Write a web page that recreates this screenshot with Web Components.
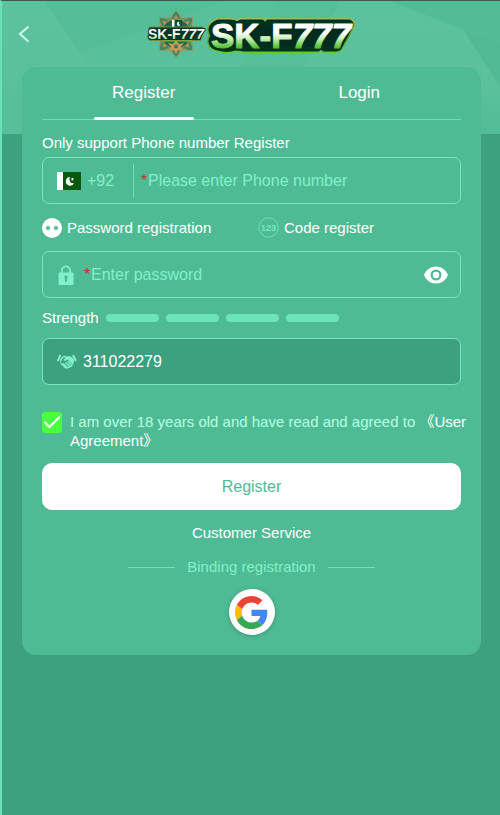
<!DOCTYPE html>
<html lang="en">
<head>
<meta charset="utf-8">
<meta name="viewport" content="width=device-width, initial-scale=1">
<title>SK-F777 Register</title>
<style>
  :root {
    --page: #3da07f; --card: #4fbb95; --line: #68e0b8; --mint: #82f0ca; --soft: #b4ffe4; --white: #fff;
  }
  body { margin: 0; background: var(--page); color: var(--white);
    font: 15px/20px "Liberation Sans", Arial, "Noto Sans CJK SC", sans-serif; }
</style>
</head>
<body>
<app-page></app-page>

<template id="t-page">
  <style>
    :host { display: grid; box-sizing: border-box; min-height: 100vh; grid-template: 66px 67px auto 1fr / minmax(0, 1fr);
      border-left: 2px solid var(--line); border-top: 1px solid #3b5a50; background: var(--page); }
    page-backdrop { grid-area: 1 / 1 / 3 / 2; }
    page-header { grid-area: 1 / 1; }
    auth-card { grid-area: 2 / 1 / 4 / 2; margin: 0 19px 20px 20px; }
  </style>
  <page-backdrop></page-backdrop>
  <page-header></page-header>
  <auth-card>
    <tab-bar slot="tabs"></tab-bar>
    <register-form></register-form>
    <social-binding></social-binding>
  </auth-card>
</template>

<template id="t-backdrop">
  <style>:host { display: block; } svg { display: block; width: 100%; height: 100%; }</style>
  <svg viewBox="0 0 498 133" preserveAspectRatio="none" aria-hidden="true">
    <defs><linearGradient id="g" x1="0" y1="0" x2="0" y2="1"><stop offset="0" stop-color="#5cc29e"/><stop offset=".6" stop-color="#5ac19c"/><stop offset="1" stop-color="#53bd98"/></linearGradient></defs>
    <rect width="498" height="133" fill="url(#g)"/>
    <path d="M42 0 78 52 222 0z" fill="#54be99"/>
    <path d="M78 52 222 0H275L240 66H86z" fill="#58c09b"/>
    <path d="M338 0 302 66H240L275 0z" fill="#56bf9a"/>
    <path d="M388 0 462 29 498 86V0z" fill="#52bc97"/>
    <path d="M462 29 498 86V44z" fill="#4fba94"/>
    <path d="M0 86 20 92V133H0z" fill="#57bf9a"/>
  </svg>
</template>

<template id="t-header">
  <style>
    :host { display: grid; grid-template-columns: 44px minmax(0, 1fr) 44px; align-items: center; }
    button { all: unset; display: grid; place-items: center; height: 44px; cursor: pointer; }
    brand-logo { justify-self: center; }
  </style>
  <button type="button" aria-label="Back">
    <svg width="12" height="18" viewBox="0 0 12 18" fill="none" stroke="#c9fff0" stroke-width="2"><path d="M10.5 1.5 2 9l8.500 7.500"/></svg>
  </button>
  <brand-logo></brand-logo>
</template>

<template id="t-logo">
  <style>:host { display: block; } svg { display: block; }
    text { font-family: "Liberation Sans", Arial, sans-serif; font-weight: 700; }</style>
  <svg width="212" height="50" viewBox="146 9 212 50" role="img" aria-label="SK-F777">
    <defs>
      <linearGradient id="f" gradientUnits="userSpaceOnUse" x1="0" y1="22" x2="0" y2="49"><stop offset=".4" stop-color="#fff"/><stop offset=".62" stop-color="#c5efb4"/><stop offset=".95" stop-color="#50c02f"/></linearGradient>
      <linearGradient id="h" gradientUnits="userSpaceOnUse" x1="0" y1="28" x2="0" y2="39"><stop offset=".55" stop-color="#fff"/><stop offset="1" stop-color="#aade8e"/></linearGradient>
      <linearGradient id="e" gradientUnits="userSpaceOnUse" x1="0" y1="18" x2="0" y2="53"><stop offset="0" stop-color="#a5bd55"/><stop offset=".5" stop-color="#579d36"/><stop offset="1" stop-color="#62cb35"/></linearGradient>
      <g id="petal"><path d="M177 10.500q5 5 5 10l-5 5-5-5q0-5 5-10z" fill="#438465" stroke="#98985f"/><path d="M177 15l2 3-2 3-2-3z" fill="#b09257"/></g>
    </defs>
    <g fill="#4b7955" stroke="#8f9860" stroke-width="1">
      <rect x="161" y="18" width="32" height="32"/>
      <rect x="162" y="19" width="30" height="30" transform="rotate(45 177 34)"/>
    </g>
    <use href="#petal"/><use href="#petal" transform="rotate(45 177 34)"/><use href="#petal" transform="rotate(135 177 34)"/>
    <use href="#petal" transform="rotate(180 177 34)"/><use href="#petal" transform="rotate(225 177 34)"/><use href="#petal" transform="rotate(315 177 34)"/>
    <circle cx="177" cy="34" r="15" fill="#24664a" stroke="#a89458"/>
    <path d="M177 40l3 4 5-1-3 4 2 4-5-1-2 4-2-4-5 1 2-4-3-4 5 1z" fill="#c49a54"/>
    <circle cx="177" cy="46.500" r="2" fill="#43764e"/>
    <rect x="173" y="20" width="10" height="8" fill="#07513a"/><rect x="173" y="20" width="2.500" height="8" fill="#fff"/>
    <path d="M180.500 22a2 2 0 1 0 1 3 2 2 0 0 1-1-3z" fill="#d9efdf"/>
    <path d="M150 27h54l1.500 2-4 11.500H151l-2-2z" fill="#08372a" stroke="#74913d"/>
    <text x="149" y="39" font-size="14" fill="url(#h)" stroke="#08372a" stroke-width="2" stroke-linejoin="round" paint-order="stroke">SK-F<tspan font-style="italic">777</tspan></text>
    <path d="M164 41h29" stroke="#70c33e"/>
    <g stroke-linejoin="round">
      <path d="M219 22h12q4 0 7 2l4-2h21l4 4h2v-4h80q3 0 3 3l-12 23q-1 1-3 1h-12l-3-3-3 3h-74q-5-1-9-1-8 3-17 0-6-1-7-6 0-4 3-6-3-3-3-7 1-5 7-7z" fill="url(#e)" stroke="url(#e)" stroke-width="8"/>
      <path d="M219 22h12q4 0 7 2l4-2h21l4 4h2v-4h80q3 0 3 3l-12 23q-1 1-3 1h-12l-3-3-3 3h-74q-5-1-9-1-8 3-17 0-6-1-7-6 0-4 3-6-3-3-3-7 1-5 7-7z" fill="#032c1f" stroke="#03311f" stroke-width="5"/>
      <text x="212" y="48" font-size="35" fill="url(#f)" stroke="url(#f)" stroke-width="1">SK-F<tspan font-style="italic">777</tspan></text>
    </g>
  </svg>
</template>

<template id="t-card">
  <style>:host { display: block; box-sizing: border-box; background: var(--card); border-radius: 14px; padding: 0 20px 20px; }</style>
  <slot name="tabs"></slot><slot></slot>
</template>

<template id="t-tabs">
  <style>
    :host { display: block; height: 53px; margin-bottom: 13px; border-bottom: 1px solid var(--line); box-sizing: border-box; }
    div { display: grid; grid-template-columns: 1fr 1fr; margin: 0 -6px; }
    button { all: unset; display: grid; justify-items: center; grid-template-rows: 50px 3px;
      align-items: center; font-size: 17px; line-height: 22px; cursor: pointer; }
    span { padding-top: 2px; }
    button[aria-selected="true"]::after { content: ""; width: 100px; height: 3px; border-radius: 2px; background: #fff; }
  </style>
  <div role="tablist">
    <button type="button" role="tab" aria-selected="true"><span>Register</span></button>
    <button type="button" role="tab" aria-selected="false"><span>Login</span></button>
  </div>
</template>

<template id="t-field">
  <style>
    :host { display: flex; align-items: center; box-sizing: border-box; height: 47px; padding: 0 12px 0 14px; border: 1px solid #78e6c0; border-radius: 7px; }
    :host([filled]) { background: var(--page); }
  </style>
  <slot name="lead"></slot><slot></slot><slot name="trail"></slot>
</template>

<template id="t-meter">
  <style>
    :host { display: flex; align-items: center; gap: 7px; height: 20px; }
    span { width: 53px; height: 8px; border-radius: 4px; background: #6de3ba; }
  </style>
  <slot></slot><span></span><span></span><span></span><span></span>
</template>

<template id="t-form">
  <style>
    :host, form { display: block; }
    label, a { color: #fff; text-decoration: none; }
    .title { display: block; margin-bottom: 4px; }
    input[type="tel"], input[type="password"], input[type="text"] { all: unset; flex: 1; min-width: 0; font-size: 16px; line-height: 20px; color: #fff; }
    input::placeholder { color: var(--mint); opacity: 1; }
    .country { all: unset; display: flex; align-items: center; gap: 6px; height: 34px; width: 76px; border-right: 1px solid var(--line);
      margin-right: 7px; font-size: 16px; color: var(--mint); cursor: pointer; }
    .req { color: #c9302c; width: 7px; font-size: 16px; }
    svg { display: block; flex: none; }
    .modes { display: grid; grid-template-columns: 216px minmax(0, 1fr); height: 47px; align-items: center; }
    .modes label { display: flex; align-items: center; gap: 5px; }
    .mark { display: grid; flex: none; }
    .mark > * { grid-area: 1 / 1; margin: 0; }
    .mark input { appearance: none; width: 100%; height: 100%; cursor: pointer; }
    .mark svg { pointer-events: none; }
    .mark text { font: 700 9px "Liberation Sans", Arial, sans-serif; }
    strength-meter { margin: 10px 0; }
    .eye { all: unset; cursor: pointer; }
    .agree { display: grid; grid-template-columns: 20px minmax(0, 1fr); gap: 8px; margin: 27px -6px 13px 0; line-height: 19px; }
    .agree label { color: var(--soft); }
    .agree a { color: #fff; }
    .submit { display: block; box-sizing: border-box; width: 100%; height: 47px; border: 0; border-radius: 10px; background: #fff;
      color: var(--card); font: 16px/20px "Liberation Sans", Arial, sans-serif; cursor: pointer; }
  </style>
  <form>
    <label class="title" for="phone">Only support Phone number Register</label>
    <form-field>
      <button class="country" slot="lead" type="button" aria-label="Country code +92">
        <svg width="24" height="18" viewBox="0 0 24 18"><path fill="#fff" d="M0 0h24v18H0z"/><path fill="#0a580e" d="M6 0h18v18H6z"/><path d="M13 5a4.300 4.300 0 1 0 4 6.200A4 4 0 0 1 13 5z" fill="#fff"/><path d="m15.500 5.500.5 1 1 .2-.8.8.1 1.200-1-.6-1 .4.3-1-.7-.9 1.100-.1z" fill="#fff"/></svg>
        <span>+92</span>
      </button>
      <span class="req" aria-hidden="true">*</span>
      <input id="phone" type="tel" placeholder="Please enter Phone number">
    </form-field>
    <div class="modes">
      <label><span class="mark"><input type="radio" name="mode" checked>
        <svg width="20" height="20" viewBox="0 0 20 20"><circle cx="10" cy="10" r="10" fill="#fff"/><path d="M6 7.500v5M3.800 8.800l4.400 2.400M8.200 8.800l-4.400 2.400M14 7.500v5M11.800 8.800l4.400 2.400M16.200 8.800l-4.400 2.400" stroke="#4fbb95" stroke-width="1.200"/></svg></span>Password registration</label>
      <label><span class="mark"><input type="radio" name="mode">
        <svg width="21" height="21" viewBox="0 0 21 21"><circle cx="10.500" cy="10.500" r="9.700" fill="none" stroke="#6de0b8"/><text x="10.500" y="14" text-anchor="middle" fill="#77e8c2">123</text></svg></span>Code register</label>
    </div>
    <form-field>
      <svg slot="lead" width="27" height="20" viewBox="0 0 27 20" aria-hidden="true"><path d="M4.800 9V6a4.200 4.700 0 0 1 8.400 0v3" fill="none" stroke="#82f0ca" stroke-width="1.800"/><path fill="#82f0ca" fill-rule="evenodd" d="M2.500 7.500h13q1 0 1 1V19q0 1-1 1h-13q-1 0-1-1V8.500q0-1 1-1zM9 10.500a1.800 1.800 0 0 0-1 3.300V17h2v-3.200a1.800 1.800 0 0 0-1-3.300z"/></svg>
      <span class="req" aria-hidden="true">*</span>
      <input type="password" placeholder="Enter password" aria-label="Enter password">
      <button class="eye" slot="trail" type="button" aria-label="Show password"><svg width="24" height="18" viewBox="0 0 24 18"><path fill="#fff" fill-rule="evenodd" d="M12 .5C6.500.500 2 4 0 9c2 5 6.500 8.500 12 8.500S22 14 24 9C22 4 17.500.500 12 .5zM12 3.500a5.500 5.500 0 1 1 0 11 5.500 5.500 0 0 1 0-11zM12 5.800a3.200 3.200 0 1 0 0 6.400 3.200 3.200 0 0 0 0-6.400z"/></svg></button>
    </form-field>
    <strength-meter><div>Strength</div></strength-meter>
    <form-field filled>
      <svg slot="lead" width="26" height="16" viewBox="0 0 26 16" fill="none" stroke="#82f0ca" aria-hidden="true"><path d="M3.500 1 .800 7M16 1l3 6" stroke-width="2"/><path d="M3.500 8c.5-3 2-5 4-5.500l2 .5" stroke-width="1.300"/><path d="m9.500 2.500-3 3.500c1 1.600 3 .3 4-.5l5.500 5.500 1.200-4C17 4 14 1.500 9.500 2.500z" fill="#82f0ca" stroke="none"/><path d="m3.500 9 5 4.500 1.500.5 5.500-2.500M6 9.500l4 3.500M8.500 8.500l4 3.500M10.500 7.500l4 3.500" stroke-width="1.500"/></svg>
      <input type="text" value="311022279" aria-label="Invitation code">
    </form-field>
    <div class="agree">
      <span class="mark"><input id="agree" type="checkbox" checked>
        <svg width="20" height="21" viewBox="0 0 20 21"><rect width="20" height="21" rx="3" fill="#48ff40"/><path d="m3 10.500 4.500 4.500L17 5.500" fill="none" stroke="#fff" stroke-width="2.200" stroke-linecap="round" stroke-linejoin="round"/></svg></span>
      <div><label for="agree">I am over 18 years old and have read and agreed to</label> <a href="#agreement"><span>《User</span> <span>Agreement》</span></a></div>
    </div>
    <button class="submit" type="submit">Register</button>
  </form>
</template>

<template id="t-social">
  <style>
    :host { display: grid; justify-items: center; gap: 14px; margin-top: 13px; }
    a { color: #fff; text-decoration: none; }
    .rule { display: flex; align-items: center; gap: 12px; color: var(--mint); }
    .rule::before, .rule::after { content: ""; width: 47px; height: 1px; background: var(--mint); opacity: .7; }
    button { all: unset; display: grid; place-items: center; width: 46px; height: 46px; margin-top: -2px; border-radius: 50%; background: #fff; box-shadow: 0 1px 4px #24705588; cursor: pointer; }
  </style>
  <a href="#service">Customer Service</a>
  <div class="rule">Binding registration</div>
  <button type="button" aria-label="Register with Google">
    <svg width="33" height="33" viewBox="0 0 48 48"><path fill="#EA4335" d="M24 9.500c3.540 0 6.710 1.220 9.210 3.600l6.850-6.850C35.900 2.380 30.470 0 24 0 14.620 0 6.510 5.380 2.560 13.220l7.980 6.190C12.430 13.720 17.740 9.500 24 9.500z"/><path fill="#4285F4" d="M46.980 24.550c0-1.570-.15-3.090-.38-4.550H24v9.020h12.940c-.58 2.960-2.260 5.480-4.780 7.180l7.730 6c4.510-4.180 7.090-10.360 7.090-17.650z"/><path fill="#FBBC05" d="M10.530 28.590c-.48-1.450-.76-2.990-.76-4.590s.27-3.140.76-4.590l-7.980-6.190C.92 16.460 0 20.120 0 24c0 3.880.92 7.540 2.560 10.780l7.970-6.190z"/><path fill="#34A853" d="M24 48c6.480 0 11.930-2.130 15.890-5.810l-7.730-6c-2.150 1.450-4.920 2.300-8.160 2.300-6.260 0-11.570-4.220-13.470-9.910l-7.980 6.190C6.510 42.620 14.620 48 24 48z"/></svg>
  </button>
</template>

<script>
  const define = (name, templateId) => customElements.define(name, class extends HTMLElement {
    constructor() {
      super();
      this.attachShadow({ mode: "open" }).append(document.getElementById(templateId).content.cloneNode(true));
    }
  });
  define("page-backdrop", "t-backdrop");
  define("brand-logo", "t-logo");
  define("page-header", "t-header");
  define("tab-bar", "t-tabs");
  define("form-field", "t-field");
  define("strength-meter", "t-meter");
  define("register-form", "t-form");
  define("social-binding", "t-social");
  define("auth-card", "t-card");
  define("app-page", "t-page");
</script>
</body>
</html>
